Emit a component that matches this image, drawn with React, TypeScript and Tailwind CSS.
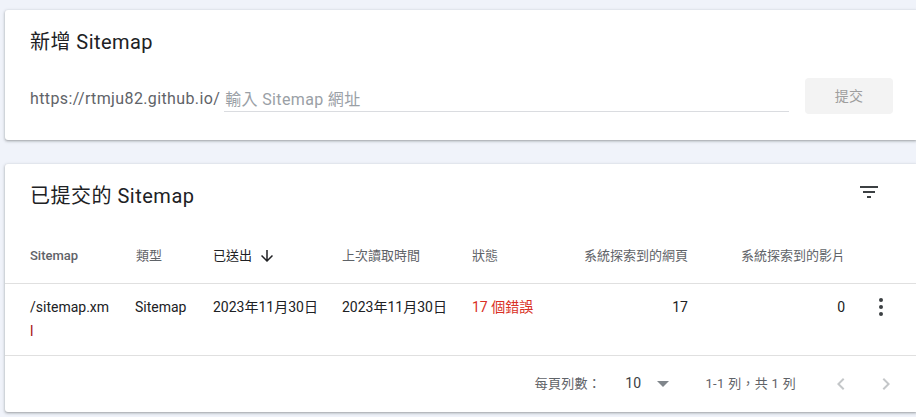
import React from "react";

const font = { fontFamily: 'Roboto, "Noto Sans CJK TC", sans-serif' };

function FilterIcon() {
  return (
    <svg width="24" height="24" viewBox="0 0 24 24" fill="#3c4043">
      <path d="M10 18h4v-2h-4v2zM3 6v2h18V6H3zm3 7h12v-2H6v2z" />
    </svg>
  );
}

function ArrowDown() {
  return (
    <svg width="18" height="18" viewBox="0 0 24 24" fill="#202124">
      <path d="M20 12l-1.41-1.41L13 16.17V4h-2v12.17l-5.58-5.59L4 12l8 8 8-8z" />
    </svg>
  );
}

function MoreVert() {
  return (
    <svg width="24" height="24" viewBox="0 0 24 24" fill="#3c4043">
      <circle cx="12" cy="5" r="2" />
      <circle cx="12" cy="12" r="2" />
      <circle cx="12" cy="19" r="2" />
    </svg>
  );
}

function ChevronLeft() {
  return (
    <svg width="24" height="24" viewBox="0 0 24 24" fill="#c4c7c9">
      <path d="M15.41 7.41L14 6l-6 6 6 6 1.41-1.41L10.83 12z" />
    </svg>
  );
}

function ChevronRight() {
  return (
    <svg width="24" height="24" viewBox="0 0 24 24" fill="#c4c7c9">
      <path d="M10 6L8.59 7.41 13.17 12l-4.58 4.59L10 18l6-6z" />
    </svg>
  );
}

export default function App() {
  return (
    <div
      className="w-[916px] h-[417px] overflow-hidden bg-[#f0f3fa] pl-[5px] pt-[10px]"
      style={font}
    >
      {/* Card 1 */}
      <div className="h-[130px] bg-white rounded-l-[3px] shadow-[0_1px_2px_rgba(60,64,67,0.3),0_1px_3px_1px_rgba(60,64,67,0.15)] pl-[25px] pr-[23px] pt-[20px]">
        <div className="text-[20px] leading-[24px] tracking-[0.45px] text-[#202124]">新增 Sitemap</div>
        <div className="mt-[24px] flex items-end h-[36px]">
          <div className="flex-1 flex items-end mb-[2px]">
            <span className="text-[16px] leading-[24px] tracking-[0.38px] text-[#5f6368] pb-[1px]">
              https://rtmju82.github.io/
            </span>
            <input
              className="ml-[4px] flex-1 h-[25px] border-b border-[#dadce0] outline-none pl-[1px] text-[16px] leading-[24px] tracking-[0.35px] text-[#202124] placeholder:text-[#9aa0a6] bg-transparent"
              placeholder="輸入 Sitemap 網址"
            />
          </div>
          <button className="ml-[16px] w-[88px] h-[36px] rounded-[4px] bg-[#f3f3f3] text-[14px] tracking-[0.25px] text-[#9e9e9e]">
            提交
          </button>
        </div>
      </div>

      {/* Card 2 */}
      <div className="mt-[24px] h-[248px] bg-white rounded-l-[3px] shadow-[0_1px_2px_rgba(60,64,67,0.3),0_1px_3px_1px_rgba(60,64,67,0.15)] pt-[8px]">
        <div className="flex items-start justify-between pl-[25px] pr-[23px] h-[48px]">
          <div className="pt-[12px] text-[20px] leading-[24px] tracking-[0.5px] text-[#202124]">已提交的 Sitemap</div>
          <button className="w-[48px] h-[48px] -mt-[4px] flex items-center justify-center">
            <FilterIcon />
          </button>
        </div>

        {/* table header */}
        <div className="mt-[8px] h-[56px] border-b border-[#e0e0e0] flex items-center pl-[25px] text-[13px] leading-[20px] text-[#5f6368]">
          <div className="w-[105px] font-medium">Sitemap</div>
          <div className="w-[78px] pl-[1px]">類型</div>
          <div className="w-[129px] flex items-center text-[#202124]">
            <span>已送出</span>
            <span className="ml-[6px] flex">
              <ArrowDown />
            </span>
          </div>
          <div className="w-[130px]">上次讀取時間</div>
          <div className="w-[88px]">狀態</div>
          <div className="w-[128px] text-right">系統探索到的網頁</div>
          <div className="w-[157px] text-right">系統探索到的影片</div>
          <div className="flex-1" />
        </div>

        {/* data row */}
        <div className="h-[72px] border-b border-[#e0e0e0] flex items-start pl-[25px] pt-[11px] text-[14px] leading-[24px] text-[#202124]">
          <div className="w-[105px]">
            <div>/sitemap.xm</div>
            <div className="text-[#a50e0e]">l</div>
          </div>
          <div className="w-[78px]">Sitemap</div>
          <div className="w-[129px]">2023年11月30日</div>
          <div className="w-[130px]">2023年11月30日</div>
          <div className="w-[88px] text-[#d93025]">17 個錯誤</div>
          <div className="w-[128px] text-right">17</div>
          <div className="w-[157px] text-right">0</div>
          <div className="flex-1 flex">
            <span className="ml-[24px] flex">
              <MoreVert />
            </span>
          </div>
        </div>

        {/* footer */}
        <div className="h-[55px] flex items-center justify-end pr-[18px] text-[13px] tracking-[0.3px] text-[#5f6368]">
          <span>每頁列數：</span>
          <span className="ml-[24px] text-[14px] text-[#3c4043]">10</span>
          <svg className="ml-[15px]" width="12" height="6" viewBox="0 0 12 6">
            <path d="M0 0h12L6 6z" fill="#80868b" />
          </svg>
          <span className="ml-[37px]">1-1 列，共 1 列</span>
          <span className="ml-[33px] flex">
            <ChevronLeft />
          </span>
          <span className="ml-[21px] flex">
            <ChevronRight />
          </span>
        </div>
      </div>
    </div>
  );
}
